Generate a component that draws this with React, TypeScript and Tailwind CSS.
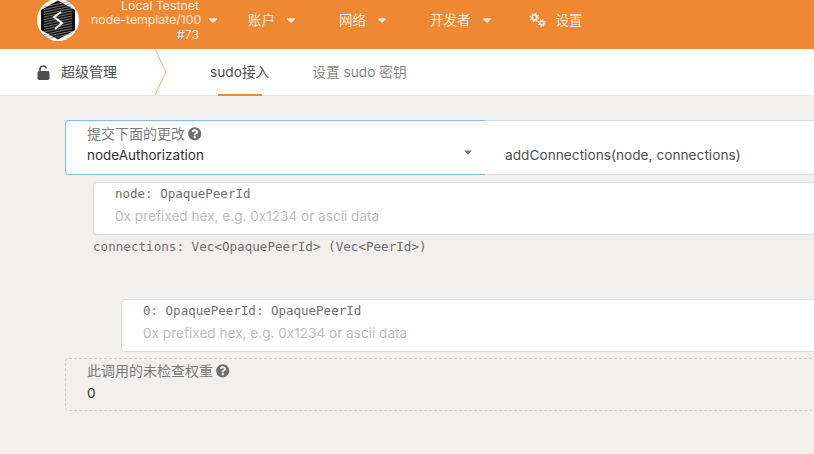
import { FaCaretDown, FaQuestionCircle } from 'react-icons/fa'

const sans = 'font-["Inter","Noto_Sans_CJK_SC",sans-serif]'
const mono = 'font-["DejaVu_Sans_Mono",monospace]'

function Logo() {
    return (
        <svg width="44" height="44" viewBox="0 0 44 44" className="shrink-0">
            <circle cx="22" cy="22" r="21" fill="#fff" />
            <path d="M22 2.5 L39 12 V32 L22 41.5 L5 32 V12 Z" fill="#111" />
            <g stroke="#8c8c8c" strokeWidth="0.8">
                {[6, 8.5, 11, 13.5, 16, 18.5, 21, 23.5, 26, 28.5, 31, 33.5, 36, 38.5].map((y) => (
                    <line key={y} x1="8" y1={y + 3} x2="36" y2={y - 3} />
                ))}
            </g>
            <path d="M25 14 L18 19 L26 25 L19 31" fill="none" stroke="#fff" strokeWidth="2" />
        </svg>
    )
}

function GearsIcon() {
    return (
        <svg width="17" height="16" viewBox="0 0 17 16" className="shrink-0" fill="none" stroke="currentColor">
            <circle cx="5.5" cy="5.5" r="2.4" strokeWidth="2" />
            <circle cx="5.5" cy="5.5" r="4.1" strokeWidth="1.4" strokeDasharray="1.6 1.6" />
            <circle cx="12.8" cy="11" r="1.9" strokeWidth="1.8" />
            <circle cx="12.8" cy="11" r="3.3" strokeWidth="1.2" strokeDasharray="1.4 1.2" />
        </svg>
    )
}

function LockIcon() {
    return (
        <svg width="13" height="15" viewBox="0 0 13 15" className="shrink-0">
            <path d="M3 6.5 V4.2 A3.2 3.2 0 0 1 9.3 3.4" fill="none" stroke="#4e4e4e" strokeWidth="1.6" />
            <rect x="0.5" y="6" width="12" height="9" rx="1.8" fill="#4e4e4e" />
        </svg>
    )
}

function NavItem({ label }: { label: string }) {
    return (
        <div className="flex items-center gap-[9px] text-[13.5px] text-[#fbeadb]">
            <span>{label}</span>
            <FaCaretDown className="text-[14px]" />
        </div>
    )
}

function ParamInput({ label, indent }: { label: string; indent: string }) {
    return (
        <div className={`${indent} -mr-3 h-[53px] rounded border border-[#dcdcdc] bg-white pl-[21px] pt-[2px]`}>
            <div className={`${mono} text-[12.5px] leading-[18px] text-[#6f6f6f]`}>{label}</div>
            <div className="mt-[3px] text-[13.6px] leading-[20px] text-[#bdbdbd]">0x prefixed hex, e.g. 0x1234 or ascii data</div>
        </div>
    )
}

export default function App() {
    return (
        <div className={`${sans} flex h-screen flex-col overflow-hidden bg-[#f2f0ee]`}>
            {/* 상단 헤더 */}
            <div className="flex h-[49px] shrink-0 items-center bg-[#ee8833] pb-[9px] pl-[36px]">
                <Logo />
                <div className="ml-[11px] flex items-center">
                    <div className="mt-[1px] w-[108px] text-right text-[12.3px] leading-[14.5px] text-[#fbeadb]">
                        <div>Local Testnet</div>
                        <div className="whitespace-nowrap">node-template/100</div>
                        <div>#73</div>
                    </div>
                    <FaCaretDown className="ml-[7px] text-[14px] text-[#fbeadb]" />
                </div>
                <div className="ml-[28px] flex items-center">
                    <NavItem label="账户" />
                    <div className="ml-[41px]">
                        <NavItem label="网络" />
                    </div>
                    <div className="ml-[41px]">
                        <NavItem label="开发者" />
                    </div>
                    <div className="ml-[35px] flex items-center gap-[10px] text-[13.5px] text-[#fbeadb]">
                        <GearsIcon />
                        <span>设置</span>
                    </div>
                </div>
            </div>

            {/* 탭 */}
            <div className="relative flex h-[47px] shrink-0 items-center border-b border-[#e6e6e6] bg-white pl-[37px] text-[13.7px]">
                <LockIcon />
                <span className="ml-[11px] text-sm text-[#4e4e4e]">超级管理</span>
                <svg width="14" height="46" viewBox="0 0 14 46" className="absolute left-[154px] top-0">
                    <path d="M1 0 L12 23 L1 46" fill="none" stroke="#f5b27a" />
                </svg>
                <div className="relative ml-[93px] flex h-full items-center text-[#4e4e4e]">
                    <span>sudo接入</span>
                    <div className="absolute -bottom-px left-[8px] h-[2px] w-[44px] bg-[#ee8833]" />
                </div>
                <span className="ml-[43px] text-[#8a8a8a]">设置 sudo 密钥</span>
            </div>

            {/* 본문 */}
            <div className="flex flex-col pl-[65px] pt-[24px]">
                <div className="-mr-3 flex h-[55px]">
                    <div className="relative flex w-[420px] shrink-0 flex-col rounded-l border border-r-0 border-[#85c1d6] bg-white pl-[21px] pt-[3px]">
                        <div className="flex items-center gap-[3px] text-sm leading-[20px] text-[#7b7b7b]">
                            提交下面的更改
                            <FaQuestionCircle className="text-[13.5px] text-[#6f6f6f]" />
                        </div>
                        <div className="mt-[1px] text-[13.5px] leading-[20px] text-[#2f2f2f]">nodeAuthorization</div>
                        <FaCaretDown className="absolute left-[396px] top-[25px] text-[12px] text-[#777]" />
                    </div>
                    <div className="flex flex-1 items-center border-y border-[#dcdcdc] bg-white pl-[20px] pt-[16px] text-[13.7px] text-[#4e4e4e]">
                        addConnections(node, connections)
                    </div>
                </div>
                <div className="mt-[7px]">
                    <ParamInput label="node: OpaquePeerId" indent="ml-[28px]" />
                </div>
                <div className={`${mono} ml-[28px] mt-[3px] text-[12.6px] leading-[18px] text-[#6f6f6f]`}>
                    {'connections: Vec<OpaquePeerId> (Vec<PeerId>)'}
                </div>
                <div className="mt-[43px]">
                    <ParamInput label="0: OpaquePeerId: OpaquePeerId" indent="ml-[56px]" />
                </div>
                <div className="-mr-3 mt-[6px] h-[53px] rounded border border-dashed border-[#cfcfcf] pl-[21px] pt-[2px]">
                    <div className="flex items-center gap-[3px] text-sm leading-[20px] text-[#7b7b7b]">
                        此调用的未检查权重
                        <FaQuestionCircle className="text-[13.5px] text-[#6f6f6f]" />
                    </div>
                    <div className="mt-[2px] text-[13.6px] leading-[20px] text-[#2f2f2f]">0</div>
                </div>
            </div>
        </div>
    )
}
